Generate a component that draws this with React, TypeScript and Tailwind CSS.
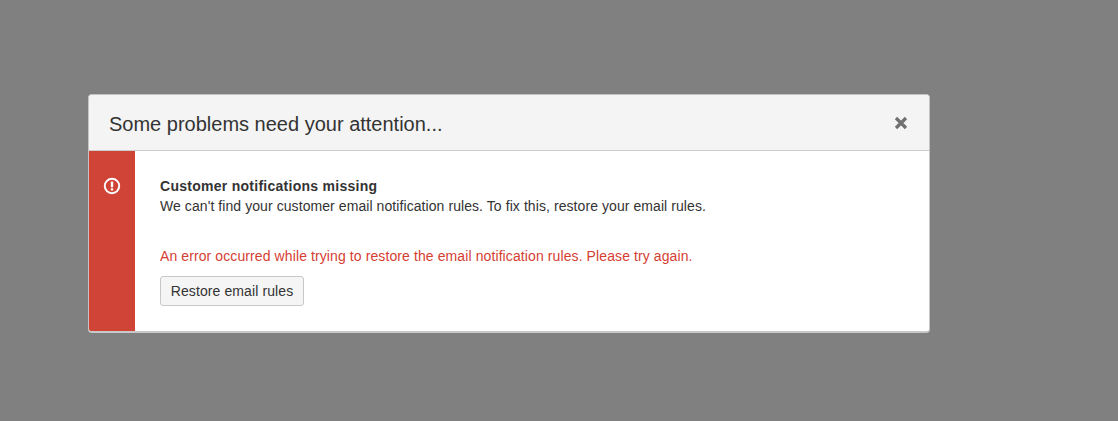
import React from "react";

export default function App() {
  return (
    <div className="w-[1118px] h-[421px] bg-[#808080] pt-[94px] pl-[88px] overflow-hidden" style={{ fontFamily: '"Liberation Sans", Arial, sans-serif' }}>
      <div className="w-[842px] h-[239px] bg-white border border-[#c4c4c4] border-b-2 border-b-[#c8c8c8] rounded-[4px] overflow-hidden flex flex-col">
        <div className="h-[56px] shrink-0 bg-[#f4f4f4] border-b border-[#cccccc] flex items-center justify-between pl-[20px] pr-[21px]">
          <div className="text-[20px] text-[#333333] leading-[22px] pt-[2px]">Some problems need your attention...</div>
          <svg width="14" height="14" viewBox="0 0 14 14"><path d="M2 2 L12 12 M12 2 L2 12" stroke="#707070" strokeWidth="3.2" /></svg>
        </div>
        <div className="flex flex-1">
          <div className="w-[46px] bg-[#cf4436] flex justify-center pt-[26px]">
            <svg width="18" height="18" viewBox="0 0 18 18" fill="none"><circle cx="9" cy="9" r="7.2" stroke="#fff" strokeWidth="2" /><rect x="7.8" y="4.5" width="2.4" height="5.8" rx="0.6" fill="#fff" /><rect x="7.8" y="11.2" width="2.4" height="2.3" rx="0.6" fill="#fff" /></svg>
          </div>
          <div className="flex-1 pl-[25px] pt-[25px] text-[14px] leading-[20px] text-[#333333]">
            <div className="font-bold tracking-[0.27px]">Customer notifications missing</div>
            <div className="tracking-[0.075px]">We can't find your customer email notification rules. To fix this, restore your email rules.</div>
            <div className="mt-[30px] text-[#d63d32] tracking-[0.1px]">An error occurred while trying to restore the email notification rules. Please try again.</div>
            <button className="block mt-[10px] w-[144px] h-[30px] bg-[#f5f5f5] border border-[#c8c8c8] rounded-[3px] text-[14px] text-[#333333] tracking-[0.1px]">Restore email rules</button>
          </div>
        </div>
      </div>
    </div>
  );
}
